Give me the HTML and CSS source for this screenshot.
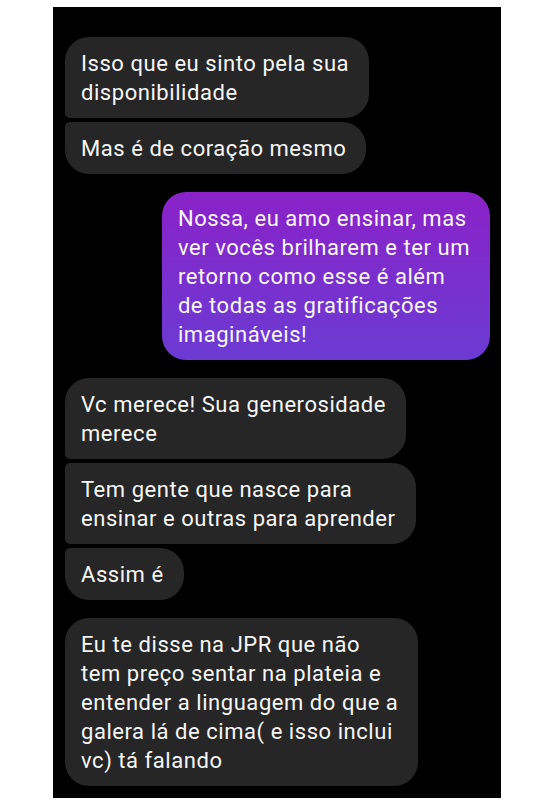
FILE: index.html
```html
<!DOCTYPE html>
<html lang="pt-BR">
<head>
  <meta charset="UTF-8">
  <title>Conversa</title>
  <link rel="stylesheet" href="styles.css">
</head>
<body>
  <div class="screen">
    <!-- grupo recebido -->
    <div class="group in">
      <div class="bubble">Isso que eu sinto pela sua<br>disponibilidade</div>
      <div class="bubble">Mas é de coração mesmo</div>
    </div>

    <!-- enviada -->
    <div class="group out">
      <div class="bubble">Nossa, eu amo ensinar, mas<br>ver vocês brilharem e ter um<br>retorno como esse é além<br>de todas as gratificações<br>imagináveis!</div>
    </div>

    <div class="group in">
      <div class="bubble">Vc merece! Sua generosidade<br>merece</div>
      <div class="bubble">Tem gente que nasce para<br>ensinar e outras para aprender</div>
      <div class="bubble">Assim é</div>
    </div>

    <div class="group in">
      <div class="bubble">Eu te disse na JPR que não<br>tem preço sentar na plateia e<br>entender a linguagem do que a<br>galera lá de cima( e isso inclui<br>vc) tá falando</div>
    </div>
  </div>
</body>
</html>
```

FILE: styles.css
```css
* {
  margin: 0;
  padding: 0;
  box-sizing: border-box;
}

body {
  background: #fff;
  font-family: Roboto, 'Noto Sans', sans-serif;
}

.screen {
  width: 448px;
  height: 791px;
  margin: 7px auto 0;
  background: #000;
  padding: 30px 11px 0 12px;
  display: flex;
  flex-direction: column;
  gap: 18px;
  overflow: hidden;
}

.group {
  display: flex;
  flex-direction: column;
  gap: 4px;
}

.group.in {
  align-items: flex-start;
}

.group.out {
  align-items: flex-end;
}

.bubble {
  font-size: 22px;
  letter-spacing: 0.55px;
  line-height: 29px;
  color: #f6f6f6;
  padding: 11.5px 20px 11.5px 16px;
  border-radius: 24px;
  white-space: nowrap;
}

.in .bubble {
  background: #262626;
}

.in .bubble:not(:last-child) {
  border-bottom-left-radius: 5px;
}

.in .bubble:not(:first-child) {
  border-top-left-radius: 5px;
}

.out .bubble {
  background: linear-gradient(180deg, #8a22c8 0%, #6b3bd3 100%);
}
```
